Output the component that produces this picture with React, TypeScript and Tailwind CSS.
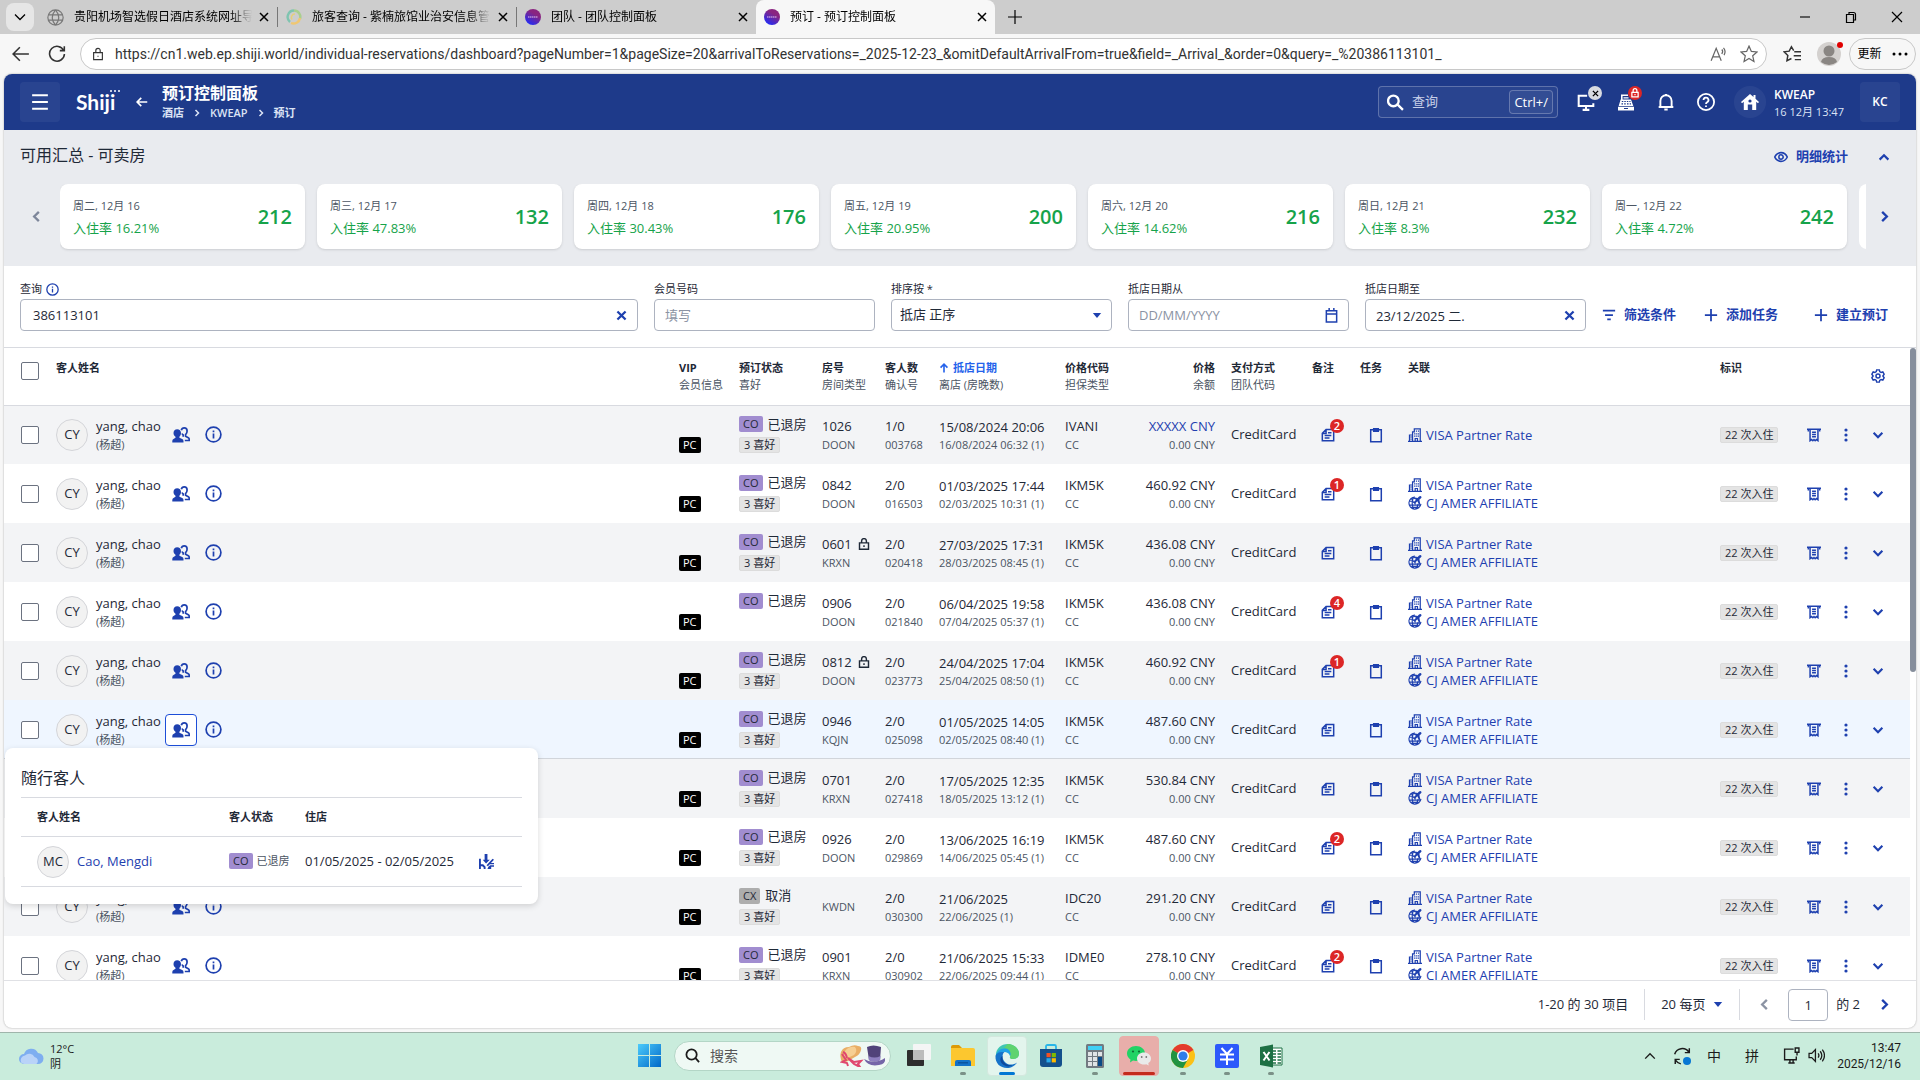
import { useState } from 'react';
import type { ReactNode } from 'react';

interface Reservation {
  status: 'CO' | 'CX';
  prefs: boolean;
  room: string;
  locked?: boolean;
  roomType: string;
  guests: string;
  confirmation: string;
  arrival: string;
  departure: string;
  rate: string;
  price: string;
  notes: number;
  agent: boolean;
}

const days = [
  { date: '周二, 12月 16', rate: '16.21%', rooms: 212 },
  { date: '周三, 12月 17', rate: '47.83%', rooms: 132 },
  { date: '周四, 12月 18', rate: '30.43%', rooms: 176 },
  { date: '周五, 12月 19', rate: '20.95%', rooms: 200 },
  { date: '周六, 12月 20', rate: '14.62%', rooms: 216 },
  { date: '周日, 12月 21', rate: '8.3%', rooms: 232 },
  { date: '周一, 12月 22', rate: '4.72%', rooms: 242 }
];

const reservations: Reservation[] = [
  { status: 'CO', prefs: true, room: '1026', roomType: 'DOON', guests: '1/0', confirmation: '003768', arrival: '15/08/2024 20:06', departure: '16/08/2024 06:32 (1)', rate: 'IVANI', price: 'XXXXX CNY', notes: 2, agent: false },
  { status: 'CO', prefs: true, room: '0842', roomType: 'DOON', guests: '2/0', confirmation: '016503', arrival: '01/03/2025 17:44', departure: '02/03/2025 10:31 (1)', rate: 'IKM5K', price: '460.92 CNY', notes: 1, agent: true },
  { status: 'CO', prefs: true, room: '0601', locked: true, roomType: 'KRXN', guests: '2/0', confirmation: '020418', arrival: '27/03/2025 17:31', departure: '28/03/2025 08:45 (1)', rate: 'IKM5K', price: '436.08 CNY', notes: 0, agent: true },
  { status: 'CO', prefs: false, room: '0906', roomType: 'DOON', guests: '2/0', confirmation: '021840', arrival: '06/04/2025 19:58', departure: '07/04/2025 05:37 (1)', rate: 'IKM5K', price: '436.08 CNY', notes: 4, agent: true },
  { status: 'CO', prefs: true, room: '0812', locked: true, roomType: 'DOON', guests: '2/0', confirmation: '023773', arrival: '24/04/2025 17:04', departure: '25/04/2025 08:50 (1)', rate: 'IKM5K', price: '460.92 CNY', notes: 1, agent: true },
  { status: 'CO', prefs: true, room: '0946', roomType: 'KQJN', guests: '2/0', confirmation: '025098', arrival: '01/05/2025 14:05', departure: '02/05/2025 08:40 (1)', rate: 'IKM5K', price: '487.60 CNY', notes: 0, agent: true },
  { status: 'CO', prefs: true, room: '0701', roomType: 'KRXN', guests: '2/0', confirmation: '027418', arrival: '17/05/2025 12:35', departure: '18/05/2025 13:12 (1)', rate: 'IKM5K', price: '530.84 CNY', notes: 0, agent: true },
  { status: 'CO', prefs: true, room: '0926', roomType: 'DOON', guests: '2/0', confirmation: '029869', arrival: '13/06/2025 16:19', departure: '14/06/2025 05:45 (1)', rate: 'IKM5K', price: '487.60 CNY', notes: 2, agent: true },
  { status: 'CX', prefs: true, room: '', roomType: 'KWDN', guests: '2/0', confirmation: '030300', arrival: '21/06/2025', departure: '22/06/2025 (1)', rate: 'IDC20', price: '291.20 CNY', notes: 0, agent: true },
  { status: 'CO', prefs: true, room: '0901', roomType: 'KRXN', guests: '2/0', confirmation: '030902', arrival: '21/06/2025 15:33', departure: '22/06/2025 09:44 (1)', rate: 'IDME0', price: '278.10 CNY', notes: 2, agent: true }
];

export default function App() {
  return (
    <div className="flex h-screen flex-col overflow-hidden bg-[#f7f7f7] font-['Open_Sans','Noto_Sans_CJK_SC',sans-serif] text-[13px] text-[#1f2937]">
      <TabStrip />
      <AddressBar />
      <div className="mx-1 mb-1 flex min-h-0 flex-1 flex-col overflow-hidden rounded-lg bg-white shadow-[0_0_2px_rgba(0,0,0,0.35)]">
        <AppHeader />
        <Availability />
        <Filters />
        <ReservationTable />
        <Pagination />
      </div>
      <Taskbar />
    </div>
  );
}

/* ---------- Browser chrome ---------- */

function TabStrip() {
  return (
    <div className="flex h-[34px] shrink-0 items-center bg-[#cdcdcd] pl-1.5 text-xs text-black">
      <button aria-label="标签页" className="mr-[5px] flex h-7 w-7 items-center justify-center rounded-lg bg-[#e6e6e6]">
        <Stroke size={16} width={1.3} d="M3 5.500l5 5 5-5" />
      </button>
      <Tab title="贵阳机场智选假日酒店系统网址导航" icon={<GlobeFavicon />} divider />
      <Tab title="旅客查询 - 紫楠旅馆业治安信息管理" icon={<SwirlFavicon />} divider />
      <Tab title="团队 - 团队控制面板" icon={<ShijiFavicon />} />
      <Tab title="预订 - 预订控制面板" icon={<ShijiFavicon />} active />
      <button aria-label="新建标签页" className="ml-2 flex h-6 w-6 items-center justify-center">
        <Stroke size={16} width={1.2} d="M8 1v14M1 8h14" />
      </button>
      <div className="ml-auto flex">
        <button aria-label="最小化" className="flex h-8 w-[46px] items-center justify-center">
          <Stroke size={16} width={1.1} d="M3 8h10" />
        </button>
        <button aria-label="还原" className="flex h-8 w-[46px] items-center justify-center">
          <Stroke size={16} width={1.2} d="M3.500 5.500h7v8h-7zM6 5.500v-2h4.500q2 0 2 2V11h-2" />
        </button>
        <button aria-label="关闭" className="flex h-8 w-[46px] items-center justify-center">
          <Stroke size={16} width={1.2} d="M3 3l10 10M13 3L3 13" />
        </button>
      </div>
    </div>
  );
}

function Tab({ title, icon, active, divider }: { title: string; icon: ReactNode; active?: boolean; divider?: boolean }) {
  return (
    <div className={`flex h-full w-[239px] items-center ${active ? 'rounded-t-lg bg-[#f7f7f7]' : ''}`}>
      <div className="flex min-w-0 flex-1 items-center gap-2.5 pl-2">
        {icon}
        <span className="w-[178px] overflow-hidden whitespace-nowrap [mask-image:linear-gradient(to_right,black_88%,transparent)]">{title}</span>
      </div>
      <button aria-label="关闭标签页" className="mr-[5px] flex h-4 w-4 items-center justify-center">
        <Stroke size={12} width={1.5} box={12} d="M2 2l8 8M10 2l-8 8" />
      </button>
      {divider && <span className="h-5 w-px bg-[#777]" />}
    </div>
  );
}

function AddressBar() {
  return (
    <div className="flex h-10 shrink-0 items-center pr-1 pl-3 text-[#333]">
      <button aria-label="返回" className="w-9">
        <Stroke size={18} width={1.4} d="M15 8H1.500M7 2L1 8l6 6" />
      </button>
      <button aria-label="刷新" className="w-8">
        <Stroke size={18} width={1.4} d="M14 5A6.600 6.600 0 1 0 14.600 8M14.500 1.200V5h-4" />
      </button>
      <div className="flex h-8 flex-1 items-center rounded-full border border-[#c8c8c8] bg-white pr-2 pl-2.5">
        <Stroke size={14} width={1.3} d="M3 6.500h10v8H3zM5.500 6.500V4a2.500 2.500 0 0 1 5 0v2.500M8 10v1" />
        <input
          aria-label="地址"
          className="ml-2.5 min-w-0 flex-1 font-['Roboto'] text-sm outline-none"
          defaultValue="https://cn1.web.ep.shiji.world/individual-reservations/dashboard?pageNumber=1&pageSize=20&arrivalToReservations=_2025-12-23_&omitDefaultArrivalFrom=true&field=_Arrival_&order=0&query=_%20386113101_"
        />
        <button aria-label="大声朗读" className="mr-3 text-[#666]">
          <Stroke size={18} width={1.1} d="M1 14L5.500 3 10 14M2.700 10.500h5.600M10.500 4q1.500 1.500 0 4M12 2.500q2.500 3 .5 6.500" />
        </button>
        <button aria-label="收藏" className="text-[#666]">
          <Stroke size={18} width={1.1} d="M8 1l2.100 4.700 5 .5-3.800 3.400 1.100 5L8 12l-4.400 2.600 1.100-5L.9 6.200l5-.5z" />
        </button>
      </div>
      <button aria-label="收藏夹" className="ml-4">
        <Stroke size={18} width={1.3} d="M9.500 5L7.500 1.500 5.500 5.500l-4.500.6 3.300 3.200-.8 4.700L7.500 12M10 6h6M9.500 9.500H16M10.500 13H16" />
      </button>
      <span className="relative ml-4 h-6 w-6">
        <svg viewBox="0 0 24 24" className="h-6 w-6">
          <circle cx="12" cy="12" r="12" fill="#d4d1cf" />
          <circle cx="12" cy="9" r="5.500" fill="#8a8683" />
          <path d="M4 20q1-5 8-5t8 5q-8 6-16 0z" fill="#8a8683" />
        </svg>
        <span className="absolute top-0 -right-0.5 h-1.5 w-1.5 rounded-full bg-[#e00000]" />
      </span>
      <button className="ml-2 flex h-8 w-[67px] items-center justify-center gap-2.5 rounded-full border border-[#c8c8c8] text-xs text-black">
        更新
        <svg viewBox="0 0 16 4" className="h-1 w-4" fill="currentColor">
          <circle cx="2" cy="2" r="1.500" />
          <circle cx="8" cy="2" r="1.500" />
          <circle cx="14" cy="2" r="1.500" />
        </svg>
      </button>
    </div>
  );
}

/* ---------- Application ---------- */

function AppHeader() {
  return (
    <header className="flex h-14 shrink-0 items-center bg-[#1e3a8a] px-4 text-white">
      <button aria-label="菜单" className="flex h-10 w-10 items-center justify-center rounded bg-white/5">
        <Stroke size={18} width={1.8} d="M1 2h14M1 8h14M1 14h14" />
      </button>
      <ShijiLogo />
      <button aria-label="返回" className="ml-4 w-[26px]">
        <Stroke size={12} width={2.2} d="M15 8H2M7 2.500L1.500 8 7 13.500" />
      </button>
      <div className="pt-0.5">
        <h1 className="text-base leading-5 font-bold">预订控制面板</h1>
        <nav className="flex items-center gap-[9px] text-[11px] leading-5 font-semibold text-[#dbe3f5]">
          <a href="#hotel">酒店</a>
          <Stroke size={8} width={3} d="M5 2l6 6-6 6" />
          <a href="#kweap">KWEAP</a>
          <Stroke size={8} width={3} d="M5 2l6 6-6 6" />
          <a href="#reservations">预订</a>
        </nav>
      </div>
      <div className="ml-auto flex h-8 w-[180px] items-center rounded border border-white/25 bg-white/5 pr-1 pl-2">
        <Stroke size={17} width={2.2} d="M11 6.500a5 5 0 1 1-10 0 5 5 0 0 1 10 0M9.800 9.800L15 15" />
        <input aria-label="查询" placeholder="查询" className="ml-2 w-0 flex-1 text-[13px] outline-none placeholder:text-[#c7d0e8]" />
        <kbd className="rounded border border-white/25 bg-white/5 px-1 font-['Open_Sans'] text-[13px] leading-[22px]">Ctrl+/</kbd>
      </div>
      <div className="ml-2 flex">
        <HeaderButton label="设备" badge={<Badge className="right-1 bg-[#d9dbe1] text-black"><Stroke size={7} width={3} d="M2 2l12 12M14 2L2 14" /></Badge>}>
          <Stroke size={18} width={1.800} d="M9 2.500H1.500v9h13V9M5 15h6M8 11.500V15" />
        </HeaderButton>
        <HeaderButton label="收银" badge={<Badge className="right-1 bg-[#dc2626] text-white"><Stroke size={10} width={2} d="M3 7h10v7H3zM5 7V4a3 3 0 0 1 6 0v3M8 9.500v2" /></Badge>}>
          <RegisterIcon />
        </HeaderButton>
        <HeaderButton label="通知">
          <Stroke size={18} width={1.700} d="M1.500 12.500h13M3 12.500V7a5 5 0 0 1 10 0v5.500M8 2V.8M6.500 14.700h3" />
        </HeaderButton>
        <HeaderButton label="帮助">
          <Stroke size={18} width={1.600} d="M15.200 8A7.200 7.200 0 1 1 .8 8a7.200 7.200 0 0 1 14.400 0M5.800 6.200a2.200 2.200 0 1 1 3.200 2q-1 .6-1 1.600M8 11v1.500" />
        </HeaderButton>
      </div>
      <button aria-label="主页" className="ml-2 flex h-8 w-8 items-center justify-center rounded-full bg-white/5">
        <svg viewBox="0 0 18 16" className="h-4 w-[18px]" fill="currentColor">
          <path d="M9 0l3.500 3V1h2v3.800L18 8l-1 1.200-1.800-1.500V16h-4v-5.500H6.800V16h-4V7.700L1 9.200 0 8z" />
          <circle cx="9" cy="7" r="1.600" fill="#1e3a8a" />
        </svg>
      </button>
      <div className="ml-2 w-[86px] pt-0.5">
        <p className="text-xs leading-[18px] font-semibold">KWEAP</p>
        <p className="text-[11px] leading-4 text-[#dbe3f5]">16 12月 13:47</p>
      </div>
      <button className="h-10 w-10 rounded bg-white/5 text-xs font-semibold">KC</button>
    </header>
  );
}

function HeaderButton({ label, badge, children }: { label: string; badge?: ReactNode; children: ReactNode }) {
  return (
    <button aria-label={label} className="relative flex h-8 w-10 items-center justify-center">
      {children}
      {badge}
    </button>
  );
}

function Badge({ className, children }: { className: string; children: ReactNode }) {
  return (
    <span className={`absolute top-0 flex h-3.5 w-3.5 items-center justify-center rounded-full text-[11px] leading-[14px] font-semibold ${className}`}>
      {children}
    </span>
  );
}

function Availability() {
  return (
    <section className="shrink-0 bg-[#e9ebef] pt-2 pb-[17px]">
      <div className="flex h-[34px] items-center px-4">
        <h2 className="text-base">可用汇总 - 可卖房</h2>
        <button className="ml-auto flex items-center gap-2 pt-1 font-semibold text-[#1e40af]">
          <Stroke size={14} width={1.800} d="M.8 8Q3 3 8 3t7.200 5Q13 13 8 13T.8 8zM10.500 8a2.500 2.500 0 1 1-5 0 2.500 2.500 0 0 1 5 0z" />
          明细统计
        </button>
        <button aria-label="收起" className="ml-5 flex h-8 w-8 items-center justify-center pt-1 text-[#1e40af]">
          <Stroke size={14} width={2.500} d="M3 11l5-5 5 5" />
        </button>
      </div>
      <div className="mt-3 flex items-center pl-4">
        <button aria-label="上一页" className="flex w-10 justify-center pr-2 text-[#7d869a]">
          <Stroke size={15} width={2.500} d="M10.500 3l-5 5 5 5" />
        </button>
        <div className="-mb-1 flex h-[69px] min-w-0 flex-1 gap-3 overflow-hidden">
          {days.map((day) => (
            <article key={day.date} className="flex h-[65px] w-[245px] shrink-0 items-center justify-between rounded-lg bg-white px-[13px] shadow-sm">
              <div>
                <p className="text-[11px] leading-[22px] text-[#4b5563]">{day.date}</p>
                <p className="leading-[22px] text-[#16a34a]">入住率 {day.rate}</p>
              </div>
              <p className="text-xl font-semibold text-[#16a34a]">{day.rooms}</p>
            </article>
          ))}
          <article className="h-[65px] w-[245px] shrink-0 rounded-lg bg-white" />
        </div>
        <button aria-label="下一页" className="flex w-[50px] justify-center pr-3.5 text-[#1e40af]">
          <Stroke size={15} width={2.500} d="M5.500 3l5 5-5 5" />
        </button>
      </div>
    </section>
  );
}

const fieldBox = 'h-8 w-full rounded border border-[#adb3c0] bg-white text-[13px] text-[#1f2937] outline-none placeholder:text-[#8b93a3]';

function Field({ id, label, hint, icon, className, children }: { id: string; label: string; hint?: ReactNode; icon?: ReactNode; className: string; children: ReactNode }) {
  return (
    <div className={className}>
      <div className="flex h-5 items-center gap-1 text-[11px]">
        <label htmlFor={id}>{label}</label>
        {hint}
      </div>
      <div className="relative">
        {children}
        {icon && <span className="pointer-events-none absolute inset-y-0 right-2.5 flex items-center text-[#1e40af]">{icon}</span>}
      </div>
    </div>
  );
}

function Filters() {
  const [query, setQuery] = useState('386113101');
  const clear = <Stroke size={13} width={2.800} d="M3 3l10 10M13 3L3 13" />;
  return (
    <section className="flex shrink-0 gap-4 border-b border-[#d8dae0] px-4 pt-[13px] pb-4">
      <Field id="query" label="查询" className="min-w-0 flex-1" icon={clear} hint={<InfoIcon size={13} />}>
        <input id="query" className={`${fieldBox} px-3`} value={query} onChange={(e) => setQuery(e.target.value)} />
      </Field>
      <Field id="member" label="会员号码" className="w-[221px]">
        <input id="member" className={`${fieldBox} px-2.5`} placeholder="填写" />
      </Field>
      <Field id="sort" label="排序按 *" className="w-[221px]" icon={<Caret />}>
        <select id="sort" className={`${fieldBox} appearance-none px-2`}>
          <option>抵店 正序</option>
          <option>抵店 倒序</option>
        </select>
      </Field>
      <Field
        id="from"
        label="抵店日期从"
        className="w-[221px]"
        icon={<Stroke size={15} width={1.600} d="M2.500 3h11v12h-11zM2.500 6.500h11M5.500 0v3M10.500 0v3" />}
      >
        <input id="from" className={`${fieldBox} px-2.5`} placeholder="DD/MM/YYYY" />
      </Field>
      <Field id="to" label="抵店日期至" className="w-[221px]" icon={clear}>
        <input id="to" className={`${fieldBox} px-2.5`} defaultValue="23/12/2025 二." />
      </Field>
      <div className="flex items-center pt-5 font-semibold text-[#1e40af]">
        <button className="flex items-center gap-2">
          <Stroke size={14} width={2} d="M1 3h14M3.500 8h9M6 13h4" />
          筛选条件
        </button>
        <button className="ml-7 flex items-center gap-2">
          <Stroke size={14} width={2} d="M8 1v14M1 8h14" />
          添加任务
        </button>
        <button className="ml-9 flex items-center gap-2 pr-3">
          <Stroke size={14} width={2} d="M8 1v14M1 8h14" />
          建立预订
        </button>
      </div>
    </section>
  );
}

const checkbox = 'block h-[18px] w-[18px] appearance-none rounded-xs border border-[#6b7280] bg-white';

function ReservationTable() {
  return (
    <div className="flex min-h-0 flex-1">
      <div className="min-w-0 flex-1 overflow-hidden">
        <table className="w-full table-fixed border-collapse">
          <colgroup>
            <col className="w-[52px]" />
            <col />
            <col className="w-[60px]" />
            <col className="w-[83px]" />
            <col className="w-[63px]" />
            <col className="w-[54px]" />
            <col className="w-[126px]" />
            <col className="w-[66px]" />
            <col className="w-[100px]" />
            <col className="w-[81px]" />
            <col className="w-12" />
            <col className="w-12" />
            <col className="w-[312px]" />
            <col className="w-[78px]" />
            <col className="w-28" />
          </colgroup>
          <thead>
            <tr className="h-[57px] border-b border-[#d8dae0] text-left align-top">
              <th className="pt-3.5 pl-[17px]">
                <input type="checkbox" aria-label="全选" className={checkbox} />
              </th>
              <HeadCell title="客人姓名" />
              <HeadCell title="VIP" sub="会员信息" />
              <HeadCell title="预订状态" sub="喜好" />
              <HeadCell title="房号" sub="房间类型" />
              <HeadCell title="客人数" sub="确认号" />
              <HeadCell title="抵店日期" sub="离店 (房晚数)" sorted />
              <HeadCell title="价格代码" sub="担保类型" />
              <HeadCell title="价格" sub="余额" right />
              <HeadCell title="支付方式" sub="团队代码" />
              <HeadCell title="备注" />
              <HeadCell title="任务" />
              <HeadCell title="关联" />
              <HeadCell title="标识" />
              <th className="align-middle">
                <button aria-label="设置" className="ml-16 flex h-8 w-8 items-center justify-center text-[#1e40af]">
                  <Stroke size={14} width={1.700} d="M6.500 1h3l.5 2 1.500 1 2-.6 1.500 2.600L13.600 8l1.400 2-1.500 2.600-2-.6-1.500 1-.5 2h-3L6 13l-1.500-1-2 .6L1 10l1.400-2L1 6l1.500-2.600 2 .6L6 3zM10.300 8a2.300 2.300 0 1 1-4.600 0 2.300 2.300 0 0 1 4.600 0z" />
                </button>
              </th>
            </tr>
          </thead>
          <tbody>
            {reservations.map((item, i) => (
              <ReservationRow key={item.confirmation} item={item} striped={i % 2 === 0} open={item.confirmation === '025098'} />
            ))}
          </tbody>
        </table>
      </div>
      <div className="w-1.5 shrink-0">
        <div className="h-[324px] rounded-full bg-[#868e9c]" />
      </div>
    </div>
  );
}

function HeadCell({ title, sub, sorted, right }: { title: string; sub?: string; sorted?: boolean; right?: boolean }) {
  return (
    <th scope="col" className={`pt-[11px] text-[11px] leading-[17px] whitespace-nowrap ${right ? 'pr-4 text-right' : ''}`}>
      <span className={`flex items-center gap-1 font-bold ${right ? 'justify-end' : ''} ${sorted ? 'text-[#2563eb]' : ''}`}>
        {sorted && <Stroke size={10} width={2.600} d="M8 15V2M2.500 7.500L8 2l5.500 5.500" />}
        {title}
      </span>
      {sub && <span className="block font-normal text-[#4b5563]">{sub}</span>}
    </th>
  );
}

function Lines({ top, bottom, right, link, tight }: { top: ReactNode; bottom: string; right?: boolean; link?: boolean; tight?: boolean }) {
  return (
    <div className={`whitespace-nowrap ${right ? 'pr-4 text-right' : ''}`}>
      {top && <p className={`leading-5 ${link ? 'text-[#1e40af]' : ''}`}>{top}</p>}
      <p className={`text-[11px] text-[#4b5563] ${tight ? 'leading-4' : 'leading-[18px]'}`}>{bottom}</p>
    </div>
  );
}

function StatusChip({ status }: { status: 'CO' | 'CX' }) {
  return (
    <span className={`inline-block h-4 rounded-xs px-1 text-[11px] leading-4 ${status === 'CO' ? 'bg-[#a18dd0]' : 'bg-[#adadad]'}`}>
      {status}
    </span>
  );
}

function ReservationRow({ item, striped, open }: { item: Reservation; striped: boolean; open: boolean }) {
  const bg = open ? 'bg-[#eff6ff] shadow-[inset_0_-1px_0_#d1d5db]' : striped ? 'bg-[#f3f4f6]' : 'bg-white';
  return (
    <tr className={`h-[59px] ${bg}`}>
      <td className="pl-[17px]">
        <input type="checkbox" aria-label="选择 yang, chao" className={checkbox} />
      </td>
      <td className="relative">
        <div className="flex items-center">
          <Avatar>CY</Avatar>
          <div className="ml-2 w-[69px]">
            <Lines top="yang, chao" bottom="(杨超)" />
          </div>
          <button aria-label="随行客人" className={`flex h-8 w-8 items-center justify-center rounded text-[#1e40af] ${open ? 'border border-[#1d4ed8] bg-white' : ''}`}>
            <GuestsIcon />
          </button>
          <button aria-label="客人信息" className="flex h-8 w-8 items-center justify-center">
            <InfoIcon size={17} />
          </button>
        </div>
        {open && <Companions />}
      </td>
      <td>
        <span className="mt-[22px] inline-block h-4 rounded-xs bg-black px-1 text-[11px] leading-4 text-white">PC</span>
      </td>
      <td>
        <div className="flex h-[37px] flex-col items-start gap-[5px] whitespace-nowrap">
          <div className="flex h-4 items-center gap-[5px]">
            <StatusChip status={item.status} />
            {item.status === 'CO' ? '已退房' : '取消'}
          </div>
          {item.prefs && <PlainChip>3 喜好</PlainChip>}
        </div>
      </td>
      <td>
        <Lines
          top={item.room && (
            <span className="flex items-center gap-1.5">
              {item.room}
              {item.locked && <Stroke size={12} width={1.900} d="M2 6.500h12v8.500H2zM4.800 6.500V4a3.200 3.200 0 0 1 6.400 0v2.500M8 9.500v2.500" />}
            </span>
          )}
          bottom={item.roomType}
        />
      </td>
      <td><Lines top={item.guests} bottom={item.confirmation} /></td>
      <td><Lines top={item.arrival} bottom={item.departure} tight /></td>
      <td><Lines top={item.rate} bottom="CC" /></td>
      <td><Lines top={item.price} bottom="0.00 CNY" right link={item.price.startsWith('X')} /></td>
      <td>CreditCard</td>
      <td>
        <button aria-label="备注" className="relative flex h-8 w-8 items-center justify-center text-[#1e40af]">
          <NoteIcon />
          {item.notes > 0 && <Badge className="right-0 bg-[#dc2626] text-white">{item.notes}</Badge>}
        </button>
      </td>
      <td>
        <button aria-label="任务" className="flex h-8 w-8 items-center justify-center text-[#1e40af]">
          <Stroke size={16} width={1.500} d="M2.700 2.700h10.600v12H2.700zM5.700 1.700h4.600v2.600H5.700z" />
        </button>
      </td>
      <td className="leading-[18px] text-[#1e40af]">
        <a href="#company" className="flex items-center gap-1"><BuildingIcon />VISA Partner Rate</a>
        {item.agent && <a href="#agent" className="flex items-center gap-1"><AgentIcon />CJ AMER AFFILIATE</a>}
      </td>
      <td><PlainChip>22 次入住</PlainChip></td>
      <td>
        <div className="flex text-[#1e40af]">
          <button aria-label="账单" className="flex h-8 w-8 items-center justify-center"><BillIcon /></button>
          <button aria-label="更多" className="flex h-8 w-8 items-center justify-center">
            <svg viewBox="0 0 4 14" className="h-3.5 w-1" fill="currentColor">
              <circle cx="2" cy="2" r="1.600" />
              <circle cx="2" cy="7" r="1.600" />
              <circle cx="2" cy="12" r="1.600" />
            </svg>
          </button>
          <button aria-label="展开" className="flex h-8 w-8 items-center justify-center">
            <Stroke size={14} width={2.500} d="M3 5.500l5 5 5-5" />
          </button>
        </div>
      </td>
    </tr>
  );
}

function PlainChip({ children }: { children: ReactNode }) {
  return (
    <span className="inline-block h-4 rounded-xs border border-[#dcdcdc] bg-[#e4e4e4] px-1 text-[11px] leading-[14px] whitespace-nowrap">
      {children}
    </span>
  );
}

function Avatar({ children }: { children: ReactNode }) {
  return (
    <span className="flex h-8 w-8 shrink-0 items-center justify-center rounded-full border border-[#d4d5d9] bg-[#f2f2f2]">
      {children}
    </span>
  );
}

// Popover with the guests that share the reservation
function Companions() {
  return (
    <div className="absolute top-12 -left-[51px] z-10 w-[533px] rounded-lg bg-white px-4 pb-[17px] shadow-[0_2px_6px_rgba(0,0,0,0.15)]">
      <h3 className="pt-[18px] pb-[7px] text-base leading-6">随行客人</h3>
      <table className="w-full table-fixed">
        <colgroup>
          <col className="w-[208px]" />
          <col className="w-[76px]" />
          <col className="w-[161px]" />
          <col />
        </colgroup>
        <thead>
          <tr className="h-[39px] border-y border-[#d8dae0] text-left text-[11px]">
            <th className="pl-4">客人姓名</th>
            <th>客人状态</th>
            <th>住店</th>
            <th aria-label="操作" />
          </tr>
        </thead>
        <tbody>
          <tr className="h-[50px] border-b border-[#d8dae0]">
            <td className="pl-4">
              <a href="#guest" className="flex items-center gap-2 text-[#1e40af]">
                <span className="text-[#1f2937]"><Avatar>MC</Avatar></span>
                Cao, Mengdi
              </a>
            </td>
            <td>
              <span className="flex items-center gap-1 text-[11px] text-[#4b5563]">
                <span className="text-[#1f2937]"><StatusChip status="CO" /></span>
                已退房
              </span>
            </td>
            <td className="whitespace-nowrap">01/05/2025 - 02/05/2025</td>
            <td>
              <button aria-label="取消合住" className="flex h-8 w-8 items-center justify-center pl-2 text-[#1e40af]">
                <ShareIcon />
              </button>
            </td>
          </tr>
        </tbody>
      </table>
    </div>
  );
}

function Pagination() {
  return (
    <footer className="flex h-12 shrink-0 items-center justify-end border-t border-[#e0e1e5] pr-4">
      <span>1-20 的 30 项目</span>
      <span className="mx-4 h-[31px] w-px bg-[#d8dae0]" />
      <div className="relative flex items-center">
        <select aria-label="每页" className="w-[62px] appearance-none outline-none">
          <option>20 每页</option>
          <option>50 每页</option>
        </select>
        <span className="pointer-events-none absolute right-0 text-[#1e40af]"><Caret /></span>
      </div>
      <span className="mr-2 ml-4 h-[31px] w-px bg-[#d8dae0]" />
      <button aria-label="上一页" className="flex h-8 w-8 items-center justify-center text-[#8b93a3]">
        <Stroke size={15} width={2.500} d="M10.500 3l-5 5 5 5" />
      </button>
      <input aria-label="页码" defaultValue="1" className="mx-2 h-8 w-10 rounded border border-[#adb3c0] text-center outline-none" />
      <span>的 2</span>
      <button aria-label="下一页" className="ml-2 flex h-8 w-8 items-center justify-center text-[#1e40af]">
        <Stroke size={15} width={2.500} d="M5.500 3l5 5-5 5" />
      </button>
    </footer>
  );
}

/* ---------- Taskbar ---------- */

function Taskbar() {
  return (
    <div className="grid h-12 shrink-0 grid-cols-[1fr_auto_1fr] items-center border-t border-[#9fb5ab] bg-[#c9ecdc] pb-0.5 text-xs text-[#1b1b1b]">
      <div className="flex items-center gap-1.5 pl-[18px]">
        <svg viewBox="0 0 26 18" className="h-[18px] w-[26px]">
          <path d="M6 17a5 5 0 0 1 0-10 7.500 7.500 0 0 1 14-1 5.500 5.500 0 0 1 0 11z" fill="#7eaef0" />
          <path d="M3 15.500a5 5 0 0 1 4-7 6 6 0 0 1 9.500 1.500 4 4 0 0 1 2 7H6z" fill="#b9d3f8" />
        </svg>
        <div className="text-[11px] leading-[15px]">
          <p>12°C</p>
          <p>阴</p>
        </div>
      </div>
      <div className="flex items-center">
        <button aria-label="开始" className="flex w-11 justify-center">
          <svg viewBox="0 0 23 23" className="h-[23px] w-[23px]">
            <defs>
              <linearGradient id="win" x1="0" y1="0" x2="1" y2="1">
                <stop offset="0" stopColor="#4ccbfb" />
                <stop offset="1" stopColor="#0068c8" />
              </linearGradient>
            </defs>
            <path d="M0 0h11v11H0zM12 0h11v11H12zM0 12h11v11H0zM12 12h11v11H12z" fill="url(#win)" />
          </svg>
        </button>
        <div className="mr-1.5 ml-[3px] flex h-[30px] w-[217px] items-center rounded-full border border-[#b3d6c6] bg-[#eff9f4] pr-1 pl-2.5">
          <Stroke size={15} width={1.900} d="M12.500 7A5.500 5.500 0 1 1 1.500 7a5.500 5.500 0 0 1 11 0M11.500 11L15 15" />
          <input aria-label="搜索" placeholder="搜索" className="ml-2.5 w-0 flex-1 text-sm outline-none placeholder:text-[#555]" />
          <HatsIcon />
        </div>
        <TaskItem label="任务视图">
          <rect x="0" y="6" width="17" height="16" rx="1" fill="#2d2d2d" />
          <rect x="6" y="0" width="18" height="16" rx="1" fill="#f4f5f5" />
          <rect x="6" y="6" width="11" height="10" fill="#bcbcbc" />
        </TaskItem>
        <TaskItem label="文件资源管理器" running>
          <path d="M0 3q0-2 2-2h6l3 3H0z" fill="#dd9a06" />
          <path d="M0 4h22q2 0 2 2v16H0z" fill="#fcc72f" />
          <path d="M4 22v-4q0-2 2-2h12q2 0 2 2v4z" fill="#1372c8" />
          <path d="M7 18.800h10" stroke="#0a4f96" strokeWidth="1.200" />
        </TaskItem>
        <TaskItem label="Edge" active>
          <path d="M1 13C0 5 6 0 12.500 0 19 0 24 5 24 9.500c0 4-3 5.500-6 5.500-2.500 0-3.500-1-3-2 1-3-2-5-5-5-4 0-7.500 2.500-8.500 5z" fill="#3fc6b4" />
          <path d="M12.500 0C19 0 24 5 24 9.500c0 4-3 5.500-6 5.500-2.500 0-3.500-1-3-2 1.500-4-1-8-6-9z" fill="#5fd36f" />
          <path d="M1 13C1 7 6 4 10.500 4.500 15 5 16.500 9.500 15 12c-1-3-3-4-5.500-4C5 8 3 13 5 17q-3-1-4-4z" fill="#1fa0e6" />
          <path d="M.500 12C1 9 5 7.500 9.500 8 7 10 7 14 9 17c3 4.500 9 4.500 13 1.500C20 22 16 24 12 24 5 24 0 19 .500 12z" fill="#1673c9" />
          <path d="M7.500 12c-1 6 4 10 10 9-3 2.500-8 1.500-11-2-2-3-1-6 1-7z" fill="#0d4a9c" />
        </TaskItem>
        <TaskItem label="Microsoft Store">
          <path d="M7 6V2.500Q7 1 8.500 1h7Q17 1 17 2.500V6" fill="none" stroke="#29b6e8" strokeWidth="1.800" />
          <path d="M1 5h22v15q0 3-3 3H4q-3 0-3-3z" fill="#14508c" />
          <path d="M7.500 9h4.200v4.200H7.500z" fill="#f25022" />
          <path d="M12.700 9h4.200v4.200h-4.200z" fill="#7fba00" />
          <path d="M7.500 14.200h4.200v4.200H7.500z" fill="#28a8ea" />
          <path d="M12.700 14.200h4.200v4.200h-4.200z" fill="#ffb900" />
        </TaskItem>
        <TaskItem label="计算器" running>
          <rect x="3" y="0" width="18" height="24" rx="1.500" fill="#727a81" />
          <rect x="5" y="2" width="14" height="4" fill="#40d0f5" />
          <path d="M5 8h4v4H5zM10 8h4v4h-4zM15 8h4v4h-4zM5 13h4v4H5zM10 13h4v4h-4zM5 18h4v4H5zM10 18h4v4h-4z" fill="#e0e4e6" />
          <path d="M15 13h4v9h-4z" fill="#0a4a86" />
        </TaskItem>
        <TaskItem label="微信" alert>
          <path d="M9 2c5 0 9 3.200 9 7.500S14 17 9 17q-1.500 0-3-.4L3 18.500l.5-3Q0 13 0 9.500C0 5.200 4 2 9 2z" fill="#22d366" />
          <circle cx="6" cy="7.500" r="1.100" fill="#126b35" />
          <circle cx="12" cy="7.500" r="1.100" fill="#126b35" />
          <path d="M17 8.500c4 0 7 2.700 7 6 0 2-1 3.500-2.700 4.600l.4 2.400-2.400-1.300q-1 .3-2.300.3c-4 0-7-2.600-7-6s3-6 7-6z" fill="#e9eaea" />
          <circle cx="14.700" cy="13" r=".9" fill="#777" />
          <circle cx="19.300" cy="13" r=".9" fill="#777" />
        </TaskItem>
        <TaskItem label="Chrome" running>
          <circle cx="12" cy="12" r="12" fill="#fbc116" />
          <path d="M12 12L1.600 6A12 12 0 0 1 22.400 6z" fill="#e33b2e" />
          <path d="M12 12L1.600 6A12 12 0 0 0 12 24l5-9z" fill="#229342" />
          <circle cx="12" cy="12" r="6" fill="#fff" />
          <circle cx="12" cy="12" r="4.600" fill="#2f7de9" />
        </TaskItem>
        <TaskItem label="财务" running>
          <rect width="24" height="24" rx="2" fill="#2c59fb" />
          <path d="M6.500 4l5.500 6 5.500-6M12 10v11M5 10.500h14M5 15.500h14" fill="none" stroke="#fff" strokeWidth="2" />
        </TaskItem>
        <TaskItem label="Excel" running>
          <path d="M12 4h11v17H12z" fill="#fff" stroke="#1d7044" strokeWidth="1" />
          <path d="M14 7h3M18.500 7H22M14 10h3M18.500 10H22M14 13h3M18.500 13H22M14 16h3M18.500 16H22M14 19h3M18.500 19H22" stroke="#1d7044" strokeWidth="1.600" />
          <path d="M1 3l13-2.500v23L1 21z" fill="#1d7044" />
          <path d="M4.500 8l6 8.500M10.500 8l-6 8.500" stroke="#fff" strokeWidth="2" />
        </TaskItem>
      </div>
      <div className="flex items-center justify-end pr-[19px] text-base">
        <button aria-label="显示隐藏的图标"><Stroke size={14} width={1.600} d="M2.500 11L8 5.500 13.500 11" /></button>
        <button aria-label="同步" className="relative ml-4">
          <Stroke size={18} width={1.300} d="M1.500 6.500A7 7 0 0 1 14 4.500M14.500 1v4h-4M2 15v-4h4M2 11.500Q4 14.500 7 15" />
          <span className="absolute right-0 bottom-0 h-2 w-2 rounded-full bg-[#0878d4]" />
        </button>
        <button className="ml-4 text-sm">中</button>
        <button className="ml-6 text-sm">拼</button>
        <button aria-label="网络" className="ml-6">
          <Stroke size={17} width={1.300} d="M10 2H1.500v10h11V9M5 15h6M6.500 12v3M9.500 12v3M11.500 1h3.500v4h-3.500zM13.200 5v3" />
        </button>
        <button aria-label="音量" className="ml-2">
          <Stroke size={17} width={1.200} d="M1 6v4h2.500L7 13.500v-11L3.500 6zM9.500 6q1.500 2 0 4M11.500 4q3 4 0 8M13.500 2.500q4 5.500 0 11" />
        </button>
        <div className="w-[76px] text-right font-['Roboto'] text-xs leading-4">
          <p>13:47</p>
          <p>2025/12/16</p>
        </div>
      </div>
    </div>
  );
}

function TaskItem({ label, running, active, alert, children }: { label: string; running?: boolean; active?: boolean; alert?: boolean; children: ReactNode }) {
  const box = active ? 'bg-[#e3f5ed] border-[#d3e8de]' : alert ? 'bg-[#e8aeaa] border-[#e8aeaa]' : 'border-transparent';
  return (
    <button aria-label={label} className={`relative mx-0.5 flex h-10 w-10 items-center justify-center rounded border ${box}`}>
      <svg viewBox="0 0 24 24" className="h-6 w-6">{children}</svg>
      {running && <span className="absolute bottom-0 h-[3px] w-1.5 rounded-full bg-[#7b9187]" />}
      {active && <span className="absolute bottom-0 h-[3px] w-4 rounded-full bg-[#0078d4]" />}
      {alert && <span className="absolute bottom-0 h-[3px] w-8 rounded-full bg-[#c42b1c]" />}
    </button>
  );
}

/* ---------- Icons ---------- */

function Stroke({ d, size, width, box = 16 }: { d: string; size: number; width: number; box?: number }) {
  return (
    <svg width={size} height={size} viewBox={`0 0 ${box} ${box}`} className="shrink-0" fill="none" stroke="currentColor" strokeWidth={width}>
      <path d={d} />
    </svg>
  );
}

function Caret() {
  return (
    <svg viewBox="0 0 10 6" className="h-[5px] w-2.5" fill="currentColor">
      <path d="M0 0h10L5 6z" />
    </svg>
  );
}

function InfoIcon({ size }: { size: number }) {
  return (
    <svg width={size} height={size} viewBox="0 0 17 17" className="text-[#1e40af]" fill="none" stroke="currentColor" strokeWidth="1.700">
      <circle cx="8.500" cy="8.500" r="7.400" />
      <path d="M8.500 7.500v5M8.500 4.500v1.700" />
    </svg>
  );
}

function GuestsIcon() {
  return (
    <svg viewBox="0 0 18 16" className="h-4 w-[18px]" fill="currentColor">
      <path d="M1.500 6C1.500 3.500 3 2.200 5.200 2.200S9 3.500 9 6c0 1.600-.8 3-1.600 3.700v1.100l2.800 1.200q1.300.6 1.300 2v1.500H.300V14q0-1.400 1.200-2l2-1.200V9.700C2.300 9 1.500 7.600 1.500 6z" />
      <path d="M9.300 3.300C9.700 1.700 10.800.900 12.200.900c1.800 0 2.900 1.300 2.900 3.200 0 1.700-.7 2.800-1.500 3.600v1.600l2.700 1.400q.9.500.9 1.500v1.300h-4.400M10 6.500q.4 1 1.200 1.500v1.800" fill="none" stroke="currentColor" strokeWidth="1.700" />
    </svg>
  );
}

function NoteIcon() {
  return (
    <svg viewBox="0 0 16 16" className="h-3.5 w-3.5" fill="none" stroke="currentColor" strokeWidth="1.700">
      <path d="M5.800 1.800h8.700v12.700h-13V6.200zM5.800 1.800v4.400H1.500" />
      <path d="M8 5.500h4M4.200 8.500h7.600M4.200 11.500h5.500" />
    </svg>
  );
}

function BuildingIcon() {
  return (
    <svg viewBox="0 0 16 16" className="h-3.5 w-3.5 shrink-0" fill="none" stroke="currentColor" strokeWidth="1.400">
      <path d="M0 15.300h16M1.700 15V8h3.500M5.200 15V4.500h2V1h6.800v14M8.200 15v-3h2.600v3" />
      <path d="M9 3.500h1.300M11.300 3.500h1.300M7 6.600h1.500M9.300 6.600h1.500M11.500 6.600h1.200M7 9.300h1.500M9.300 9.300h1.500M11.500 9.300h1.200M3.500 9.500v1.500M3.500 12v1.500" />
    </svg>
  );
}

function AgentIcon() {
  return (
    <svg viewBox="0 0 16 16" className="h-3.5 w-3.5 shrink-0" fill="none" stroke="currentColor" strokeWidth="1.300">
      <path d="M8 1.200A6.900 6.900 0 1 0 14.800 9M1.200 6h5M1.200 10.500h13M6.500 1.500Q3 8 6.500 15M8.500 15q3-3 3-6M2.500 3.500h3M3 13h10" />
      <path d="M14.800.300c.9.700.8 1.500 0 2.300L13 4.400l1 5-1.300.8-2-4.200-2 1.900.2 1.600-.9.800L7 8.200 4.900 7.100l.8-.9 1.600.2 1.900-2L5.500 2.600l.8-1.200 4.700.9L12.600.700q1.300-1 2.200-.4z" fill="currentColor" stroke="none" />
    </svg>
  );
}

function BillIcon() {
  return (
    <svg viewBox="0 0 16 16" className="h-3.5 w-3.5" fill="none" stroke="currentColor" strokeWidth="1.700">
      <path d="M0 1.500h16M1.500 1.500v2.500M14.500 1.500v2.500M3.500 1.500v13l1.800-1.300L6.700 14.500 8 13.200l1.300 1.300 1.400-1.300 1.800 1.300v-13M5.800 4.800h4.400M5.800 7.400h4.400M5.800 10h4.400" />
    </svg>
  );
}

function ShareIcon() {
  return (
    <svg viewBox="0 0 16 16" className="h-[15px] w-[15px]" fill="currentColor">
      <path d="M6 0h3v6h2.500L7.500 10 4 6h2zM0 5h2v6h2.500L7 13.500V16H5v-1.500L3.500 13H2v3H0z" />
      <path d="M14.500 5L16 6.200 9.500 13 8 12zM10 13.500L12 12h4v1.500h-3V16H9zM12.500 9.500H16V11h-4.500z" />
    </svg>
  );
}

function RegisterIcon() {
  return (
    <svg viewBox="0 0 16 16" className="h-[17px] w-4" fill="currentColor">
      <path d="M3 0h7v1.600H4.600V5H13l2.300 6.500H.700L2.600 5H3zM0 12.300h16V16H0z" />
      <path d="M5.500 2.800h5v1.300h-5z" />
      <path d="M3.800 7h1.500M6.300 7h1.500M8.800 7h1.500M11.300 7h1.200M3.500 9.300h1.500M6.200 9.300h1.500M9 9.300h1.500M11.700 9.300H13M6 14h4" stroke="#1e3a8a" strokeWidth="1.200" />
    </svg>
  );
}

function ShijiLogo() {
  return (
    <div className="relative ml-4 w-11 font-['Liberation_Sans_Narrow','Lato'] text-[21px] leading-7 font-bold">
      Shiji
      <span className="absolute top-0.5 right-0 flex gap-0.5">
        <i className="h-0.5 w-0.5 rounded-full bg-white" />
        <i className="h-0.5 w-0.5 rounded-full bg-white" />
        <i className="h-0.5 w-0.5 rounded-full bg-white" />
      </span>
    </div>
  );
}

function GlobeFavicon() {
  return (
    <span className="text-[#777]">
      <Stroke size={17} width={1.100} d="M15.200 8A7.200 7.200 0 1 1 .8 8a7.200 7.200 0 0 1 14.400 0M8 .8q-6 7.200 0 14.400M8 .8q6 7.200 0 14.400M1.500 5.500h13M1.500 10.500h13" />
    </span>
  );
}

function SwirlFavicon() {
  return (
    <svg viewBox="0 0 16 16" className="h-4 w-4 shrink-0" fill="none" strokeWidth="2.400">
      <path d="M4 13A6.500 6.500 0 0 1 8 1.500" stroke="#7fc4b0" />
      <path d="M8 1.500A6.500 6.500 0 0 1 14 10" stroke="#a9cf8e" />
      <path d="M14 9a6.500 6.500 0 0 1-9 5" stroke="#f0c772" />
      <path d="M6 10.500A3.500 3.500 0 0 1 9 5" stroke="#e6cf7a" strokeWidth="1.500" />
    </svg>
  );
}

function ShijiFavicon() {
  return (
    <svg viewBox="0 0 16 16" className="h-4 w-4 shrink-0">
      <defs>
        <linearGradient id="fav" x1="0.800" y1="0" x2="0.200" y2="1">
          <stop offset="0.300" stopColor="#8a2580" />
          <stop offset="1" stopColor="#1a2cff" />
        </linearGradient>
      </defs>
      <circle cx="8" cy="8" r="8" fill="url(#fav)" />
      <path d="M3 8h10" stroke="#e6c8ee" strokeWidth="1.200" strokeDasharray="1.500 .5" />
    </svg>
  );
}

function HatsIcon() {
  return (
    <svg viewBox="0 0 46 22" className="h-[22px] w-[46px]">
      <path d="M1 7Q3 2 9 2q5-3 9-1 4 0 3 4-1 5-6 7-6 4-12 6-4-5-2-11z" fill="#e9ae66" />
      <path d="M5 6q4-5 10-4 3 4-1 8-5 3-9 3-2-3 0-7z" fill="#f6cf93" />
      <path d="M3 7q3 1 4 6M2 9l4 6-4 2 5 1 1 3M8 13l6 4 7-1-3 3 2 3-6-3z" fill="none" stroke="#e0476e" strokeWidth="2" />
      <path d="M27 2q6-3 14 0l-1 13q-6 3-11 0z" fill="#51437a" />
      <path d="M28.500 11q6 3 12 0l-.3 4q-6 3-11.400 0z" fill="#8e7fc0" />
      <path d="M24 14q10 6 21-1 1 6-6 7-11 2-15-6z" fill="#7566a8" />
    </svg>
  );
}
